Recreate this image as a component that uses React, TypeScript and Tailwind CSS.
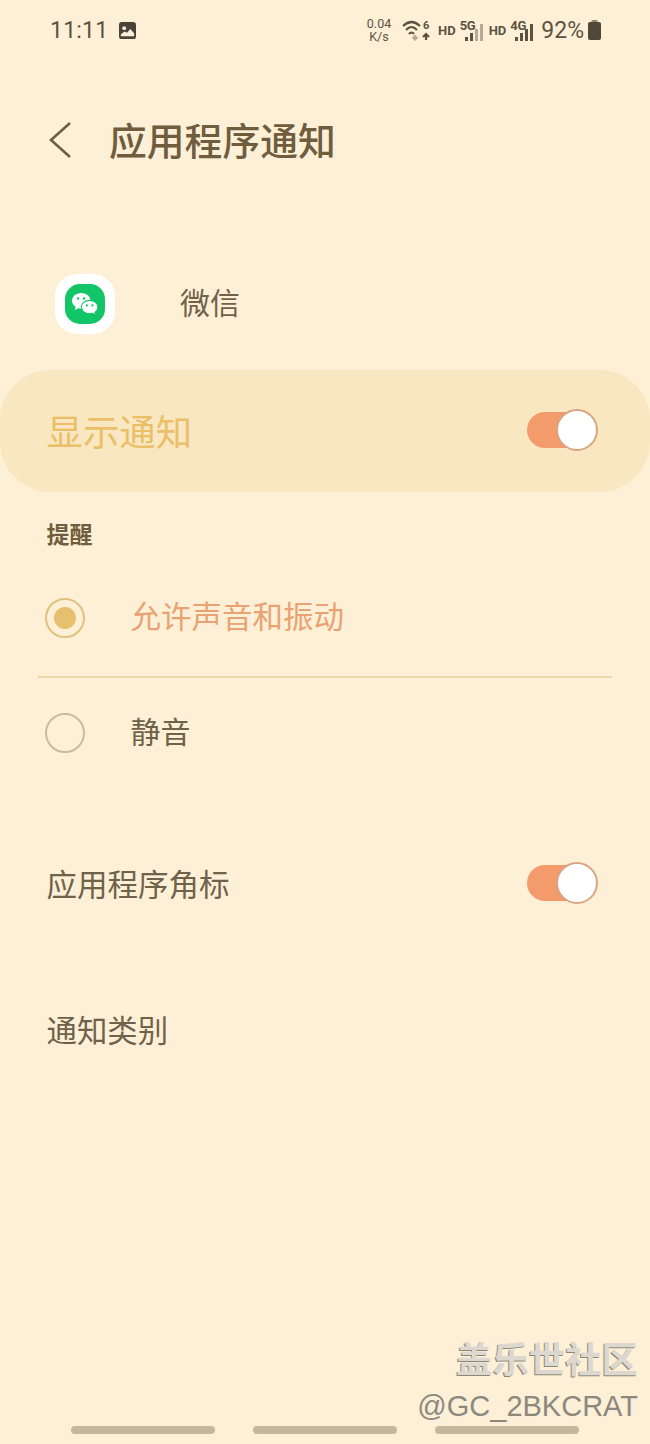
const CJK = "font-['Noto_Sans_CJK_SC','Noto_Sans',sans-serif]";

function Signal({ dim }: { dim?: boolean }) {
  const bars = [
    { x: 0, h: 4 },
    { x: 5, h: 8 },
    { x: 10, h: 12 },
    { x: 15, h: 17 },
  ];
  return (
    <svg width="18" height="17" viewBox="0 0 18 17" className="block">
      {bars.map((b, i) => (
        <rect
          key={b.x}
          x={b.x}
          y={17 - b.h}
          width="3"
          height={b.h}
          fill={dim && i > 1 ? "#b5ab99" : "#5c5242"}
        />
      ))}
    </svg>
  );
}

function NetIcon({ label, dim }: { label: string; dim?: boolean }) {
  return (
    <div className="flex items-center gap-[4px]">
      <span className="text-[13px] font-bold leading-none text-[#5c5242] font-['Roboto',sans-serif]">HD</span>
      <div className="relative h-[20px] w-[23px]">
        <span className="absolute left-0 top-[-1px] text-[13px] font-bold leading-[13px] tracking-[-0.3px] text-[#5c5242] font-['Roboto',sans-serif]">
          {label}
        </span>
        <div className="absolute bottom-[-1px] right-0">
          <Signal dim={dim} />
        </div>
      </div>
    </div>
  );
}

function StatusBar() {
  return (
    <div className="flex h-[60px] items-center pl-[50px] pr-[49px] font-['Roboto',sans-serif] text-[#5c5242]">
      <span className="text-[23px] leading-none tracking-[0.2px]">11:11</span>
      <svg width="17" height="17" viewBox="0 0 18 18" className="ml-[11px]">
        <rect width="18" height="18" rx="3" fill="#4a4438" />
        <circle cx="5.5" cy="6.5" r="2" fill="#fef0d7" />
        <path d="M2 15 L2 13 L6 10 L8.5 11.5 L12 7.5 L16 12 L16 15 Z" fill="#fef0d7" />
      </svg>
      <div className="ml-auto flex items-center">
        <div className="flex w-[26px] flex-col items-center text-[12.5px] leading-[13px]">
          <span>0.04</span>
          <span>K/s</span>
        </div>
        <svg width="29" height="22" viewBox="0 0 29 22" className="ml-[10px]" fill="none" stroke="#5c5242" strokeWidth="2.2">
          <path d="M1 7 Q9.5 -1 18 7" />
          <path d="M4 11 Q9.5 5 15 11" />
          <path d="M7 15 Q9.5 12 12 15" />
          <path d="M13 16 v4 m-2.5 -2 l2.5 2.5 l2.5 -2.5" stroke="#b5ab99" />
          <path d="M24 21 v-6 m-3 3 l3 -3 l3 3" />
          <text x="21" y="10" fontSize="11" fontWeight="700" fill="#5c5242" stroke="none" fontFamily="Roboto, sans-serif">6</text>
        </svg>
        <div className="ml-[7px]">
          <NetIcon label="5G" dim />
        </div>
        <div className="ml-[6px]">
          <NetIcon label="4G" />
        </div>
        <span className="ml-[8px] text-[23px] leading-none">92%</span>
        <svg width="13" height="20" viewBox="0 0 13 20" className="ml-[4px]">
          <rect x="3.5" y="0" width="6" height="3" rx="1" fill="#8f8674" />
          <rect x="0" y="2" width="13" height="18" rx="2" fill="#4f4737" />
        </svg>
      </div>
    </div>
  );
}

function Toggle() {
  return (
    <div className="relative mb-[3px] h-[36px] w-[71px]">
      <div className="absolute left-0 top-0 h-[36px] w-[63px] rounded-full bg-[#f39b6b]" />
      <div className="absolute right-0 top-[-3px] h-[42px] w-[42px] rounded-full border-2 border-[#d9a581] bg-white" />
    </div>
  );
}

function WeChatIcon() {
  return (
    <div className="flex h-[60px] w-[60px] items-center justify-center rounded-[22px] bg-white">
      <div className="flex h-[40px] w-[40px] items-center justify-center rounded-[15px] bg-[#12c566]">
        <svg width="28" height="25" viewBox="0 0 30 27">
          <path d="M11 1 C5 1 1 5 1 9.5 C1 12.5 2.5 14.5 5 16 L4 19.5 L8 17.5 C9.5 18 11 18 12.5 18 C16 18 21 14 21 9.5 C21 5 17 1 11 1 Z" fill="#ffffff" />
          <circle cx="7.5" cy="7" r="1.3" fill="#12c566" />
          <circle cx="14" cy="7" r="1.3" fill="#12c566" />
          <path d="M20 9 C15 9 11 12.3 11 16.3 C11 20.3 15 23.5 20 23.5 C21 23.5 22 23.4 23 23 L26.5 25 L25.7 22 C27.8 20.6 29 18.6 29 16.3 C29 12.3 25 9 20 9 Z" fill="#ffffff" stroke="#12c566" strokeWidth="1.2" />
          <circle cx="17" cy="14.5" r="1.2" fill="#12c566" />
          <circle cx="23" cy="14.5" r="1.2" fill="#12c566" />
        </svg>
      </div>
    </div>
  );
}

export default function App() {
  return (
    <div className={`relative h-[1444px] w-[650px] overflow-hidden bg-[#fef0d7] ${CJK}`}>
      <StatusBar />

      {/* Header */}
      <div className="mt-[50px] flex h-[60px] items-center pl-[48px]">
        <svg width="26" height="38" viewBox="0 0 26 38" fill="none" stroke="#6f5d3e" strokeWidth="2.6">
          <path d="M22 2 L3 19 L22 36" />
        </svg>
        <h1 className="mb-[2px] ml-[35px] text-[37.8px] font-medium leading-none text-[#6f5d3e]">应用程序通知</h1>
      </div>

      {/* App row */}
      <div className="mt-[104px] flex items-center pl-[55px]">
        <WeChatIcon />
        <span className="mb-[6px] ml-[65px] text-[30px] leading-none text-[#6f6249]">微信</span>
      </div>

      {/* Show notifications */}
      <div className="mt-[36px] flex h-[122px] items-center justify-between rounded-[50px] bg-[#f9e7c2] pl-[46.5px] pr-[52px]">
        <span className="mb-[2px] text-[36.4px] leading-none text-[#eabf68]">显示通知</span>
        <Toggle />
      </div>

      <div className="mt-[30px] pl-[46.5px] text-[23px] font-bold leading-none text-[#6f5d3e]">提醒</div>

      {/* Reminder options */}
      <div className="mx-[38px] mt-[15px]">
        <div className="flex h-[118px] items-center border-b-2 border-[#ecd8a8] pl-[7px]">
          <div className="flex h-[40px] w-[40px] items-center justify-center rounded-full border-2 border-[#e0c27f]">
            <div className="h-[22px] w-[22px] rounded-full bg-[#e6bf6f]" />
          </div>
          <span className="mb-[6px] ml-[45.5px] text-[30.5px] leading-none text-[#e9a272]">允许声音和振动</span>
        </div>
        <div className="flex h-[110px] items-center pl-[7px]">
          <div className="h-[40px] w-[40px] rounded-full border-2 border-[#c9bb9f]" />
          <span className="mb-[6px] ml-[45.5px] text-[30px] leading-none text-[#6f6249]">静音</span>
        </div>
      </div>

      {/* Badge */}
      <div className="mt-[66px] flex h-[60px] items-center justify-between pl-[46.5px] pr-[52px]">
        <span className="mb-[2px] text-[30.5px] leading-none text-[#6f6249]">应用程序角标</span>
        <Toggle />
      </div>

      <div className="mt-[100px] pl-[46.5px] text-[30.4px] leading-none text-[#6f6249]">通知类别</div>

      {/* Watermark */}
      <div className="absolute right-[12px] top-[1335px] flex flex-col items-end">
        <span className="text-[36.4px] font-bold leading-[44px] text-[#dcd8cf] [text-shadow:-1px_1px_0_#8d8674]">盖乐世社区</span>
        <span className="mt-[7px] font-['Liberation_Sans',sans-serif] text-[29px] leading-[40px] text-[#8e8879] [text-shadow:1px_1px_0_#f3eee4]">
          @GC_2BKCRAT
        </span>
      </div>

      {/* Nav bar */}
      <div className="absolute bottom-[10px] left-0 flex w-full justify-between px-[71px]">
        <div className="h-[8px] w-[144px] rounded-full bg-[#c4b79e]" />
        <div className="h-[8px] w-[144px] rounded-full bg-[#c4b79e]" />
        <div className="h-[8px] w-[144px] rounded-full bg-[#c4b79e]" />
      </div>
    </div>
  );
}
